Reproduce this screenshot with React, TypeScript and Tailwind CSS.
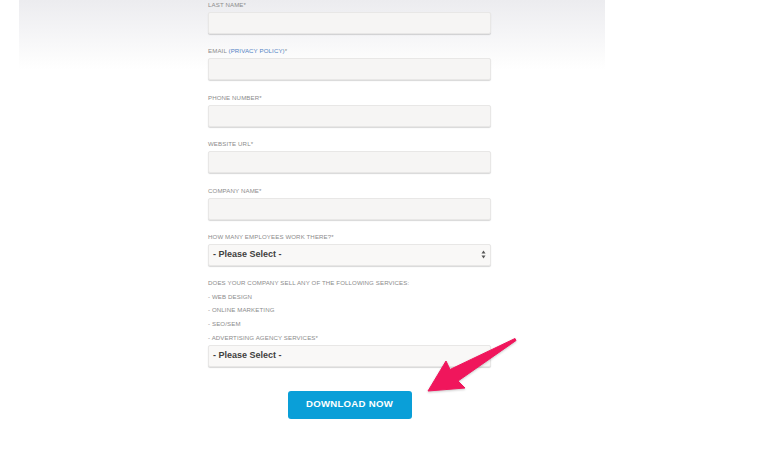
import React from "react";

const fields = [
  { id: "last", label: "LAST NAME*" },
  { id: "email", label: "EMAIL", link: "(PRIVACY POLICY)" },
  { id: "phone", label: "PHONE NUMBER*" },
  { id: "website", label: "WEBSITE URL*" },
  { id: "company", label: "COMPANY NAME*" },
];

const services = [
  "DOES YOUR COMPANY SELL ANY OF THE FOLLOWING SERVICES:",
  "- WEB DESIGN",
  "- ONLINE MARKETING",
  "- SEO/SEM",
  "- ADVERTISING AGENCY SERVICES*",
];

function SelectBox({ arrows }: { arrows?: boolean }) {
  return (
    <div className="flex h-[22px] w-[283px] items-center justify-between rounded-[2px] border border-[#e8e7e6] bg-[#f9f8f7] pl-[4px] pr-[4px] shadow-[0_1px_1px_rgba(0,0,0,0.16)]">
      <span className="text-[9px] font-bold text-[#404040]">- Please Select -</span>
      {arrows && (
        <svg width="5" height="9" viewBox="0 0 5 9">
          <path d="M2.5 0.5 L4.5 3.5 L0.5 3.5 Z" fill="#555" />
          <path d="M2.5 8.5 L4.5 5.5 L0.5 5.5 Z" fill="#555" />
        </svg>
      )}
    </div>
  );
}

export default function App() {
  return (
    <div
      className="relative h-[450px] w-[780px] overflow-hidden bg-white"
      style={{ fontFamily: "'Liberation Sans', Arial, sans-serif" }}
    >
      {/* top panel */}
      <div className="ml-[19px] w-[586px] bg-[linear-gradient(to_bottom,#ececef_0px,#f4f4f6_30px,#fcfcfc_58px,#ffffff_70px)]">
        <div className="ml-[189px] w-[283px]">
          {fields.map((f) => (
            <div key={f.id} className="mb-[12.4px]">
              <div className="h-[10px] text-[6.1px] leading-[10px] tracking-[0.02em] text-[#8c8c8c]">
                {f.label}
                {f.link && (
                  <>
                    {" "}
                    <span className="text-[#5383c4]">{f.link}</span>*
                  </>
                )}
              </div>
              <div className="mt-[2px] h-[22px] w-[283px] rounded-[2px] border border-[#e8e7e6] bg-[#f6f5f4] shadow-[0_1px_1px_rgba(0,0,0,0.16)]" />
            </div>
          ))}

          <div>
            <div className="h-[10px] text-[6.1px] leading-[10px] tracking-[0.02em] text-[#8c8c8c]">
              HOW MANY EMPLOYEES WORK THERE?*
            </div>
            <div className="mt-[2px]">
              <SelectBox arrows />
            </div>
          </div>

          <div className="mt-[10px]">
            {services.map((s) => (
              <div
                key={s}
                className="h-[13.7px] text-[6.1px] leading-[13.7px] tracking-[0.02em] text-[#8c8c8c]"
              >
                {s}
              </div>
            ))}
            <div className="mt-[0.3px]">
              <SelectBox />
            </div>
          </div>

          <div className="mt-[24px] flex justify-center">
            <button className="h-[28px] w-[124px] rounded-[3px] bg-[#0a9fd8] text-[9.6px] font-bold tracking-[0.03em] text-white">
              DOWNLOAD NOW
            </button>
          </div>
        </div>
      </div>

      {/* annotation arrow */}
      <svg
        className="absolute left-0 top-0"
        width="780"
        height="450"
        viewBox="0 0 780 450"
      >
        <path
          d="M428 391 L446 361 L450 369.5 L515 338.5 L516 340.5 L458 381 L465 388 Z"
          fill="#f0165c"
          stroke="#f0165c"
          strokeWidth="1"
          strokeLinejoin="round"
          style={{ filter: "drop-shadow(0 1px 1px rgba(0,0,0,0.22))" }}
        />
      </svg>
    </div>
  );
}
